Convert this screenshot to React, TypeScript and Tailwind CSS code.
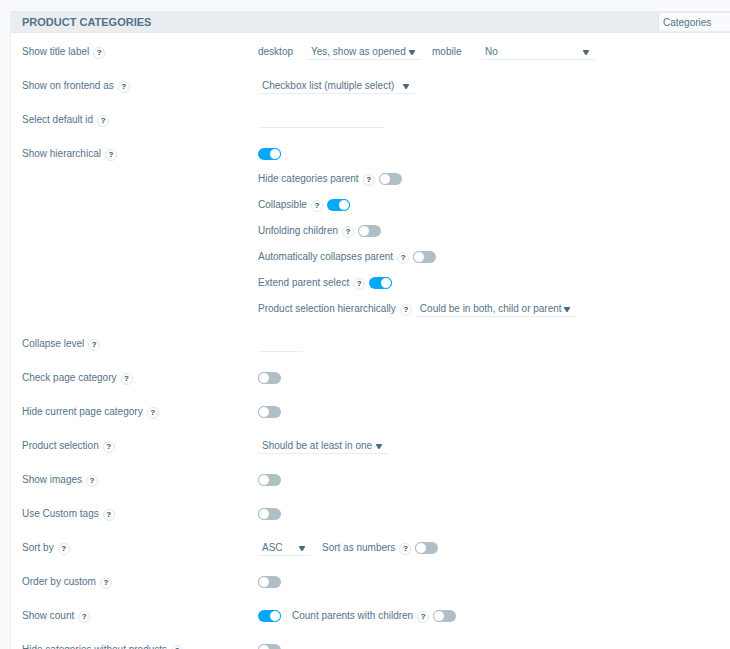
import { ReactNode, useState } from "react";

function Help({ topic }: { topic: string }) {
  return (
    <button
      type="button"
      aria-label={`Help: ${topic}`}
      className="mt-0.5 flex h-3 w-3 shrink-0 items-center justify-center rounded-full border border-[#e0e7ec] bg-white text-[8px] leading-none font-bold text-[#2f4a5c]"
    >
      ?
    </button>
  );
}

function Toggle({ id, label, on = false }: { id: string; label?: string; on?: boolean }) {
  return (
    <input
      id={id}
      type="checkbox"
      role="switch"
      aria-label={label}
      defaultChecked={on}
      className="flex h-3 w-[23px] shrink-0 appearance-none rounded-full bg-[#b0bec5] before:h-3 before:w-3 before:rounded-full before:border before:border-[#b0bec5] before:bg-white checked:justify-end checked:bg-[#03a9f4] checked:before:border-[#03a9f4]"
    />
  );
}

function Select({ id, label, options, width }: { id: string; label?: string; options: string[]; width: string }) {
  return (
    <div className={`relative shrink-0 ${width}`}>
      <select
        id={id}
        aria-label={label}
        className="block h-4 w-full appearance-none border-b border-[#e8edf0] bg-transparent pl-1 leading-4"
      >
        {options.map((option) => (
          <option key={option}>{option}</option>
        ))}
      </select>
      <svg viewBox="0 0 6 5" className="pointer-events-none absolute top-[6px] right-1.5 h-[5px] w-1.5 fill-[#4b6b80]">
        <path d="M0 0h6v1L3.5 5h-1L0 1z" />
      </svg>
    </div>
  );
}

function Row({ label, id, children }: { label: string; id: string; children: ReactNode }) {
  return (
    <div className="grid grid-cols-[236px_1fr]">
      <div className="flex h-[34px] items-center gap-1">
        <label htmlFor={id}>{label}</label>
        <Help topic={label} />
      </div>
      <div className="flex min-h-[34px] flex-wrap items-center">{children}</div>
    </div>
  );
}

function SubOption({ label, id, children }: { label: string; id: string; children: ReactNode }) {
  return (
    <div className="flex h-[26px] items-center gap-1">
      <label htmlFor={id}>{label}</label>
      <Help topic={label} />
      {children}
    </div>
  );
}

export default function App() {
  const [title, setTitle] = useState("Categories");

  return (
    <div className="min-h-screen bg-[#f8fafc] pt-[11px] pl-2.5 font-['Liberation_Sans',Arial,sans-serif] text-[10px] leading-4 text-[#54728a]">
      <section className="border-l border-[#e8edf0] bg-white">
        <header className="flex h-[22px] items-center justify-between border-y border-[#e4eaed] bg-[#eaeef0] pl-[11px]">
          <h2 className="text-[11px] font-bold">PRODUCT CATEGORIES</h2>
          <input
            type="text"
            aria-label="Title"
            value={title}
            onChange={(e) => setTitle(e.target.value)}
            className="h-[18px] w-[72px] border-l border-[#dfe6ea] bg-[#f8fafb] pl-1"
          />
        </header>

        <div className="pt-0.5 pr-3 pb-4 pl-[11px]">
          <Row label="Show title label" id="title-desktop">
            <label htmlFor="title-desktop" className="w-[49px]">desktop</label>
            <Select id="title-desktop" width="w-[114px]" options={["Yes, show as opened", "Yes, show as closed", "No"]} />
            <label htmlFor="title-mobile" className="ml-[11px] w-[49px]">mobile</label>
            <Select id="title-mobile" width="w-[114px]" options={["No", "Yes, show as opened", "Yes, show as closed"]} />
          </Row>
          <Row label="Show on frontend as" id="frontend">
            <Select id="frontend" width="w-[157px]" options={["Checkbox list (multiple select)", "Radio list", "Drop-down"]} />
          </Row>
          <Row label="Select default id" id="default-id">
            <input id="default-id" type="text" className="h-4 w-[126px] border-b border-[#e8edf0]" />
          </Row>
          <Row label="Show hierarchical" id="hierarchical">
            <div>
              <div className="flex h-[34px] items-center">
                <Toggle id="hierarchical" on />
              </div>
              <div className="-mt-[5px] pb-[5px]">
                <SubOption label="Hide categories parent" id="hide-parent">
                  <Toggle id="hide-parent" />
                </SubOption>
                <SubOption label="Collapsible" id="collapsible">
                  <Toggle id="collapsible" on />
                </SubOption>
                <SubOption label="Unfolding children" id="unfolding">
                  <Toggle id="unfolding" />
                </SubOption>
                <SubOption label="Automatically collapses parent" id="auto-collapse">
                  <Toggle id="auto-collapse" />
                </SubOption>
                <SubOption label="Extend parent select" id="extend-parent">
                  <Toggle id="extend-parent" on />
                </SubOption>
                <SubOption label="Product selection hierarchically" id="selection-hierarchy">
                  <Select id="selection-hierarchy" width="w-[160px]" options={["Could be in both, child or parent", "Should be in both"]} />
                </SubOption>
              </div>
            </div>
          </Row>
          <Row label="Collapse level" id="collapse-level">
            <input id="collapse-level" type="text" className="h-4 w-[45px] border-b border-[#e8edf0]" />
          </Row>
          <Row label="Check page category" id="check-page">
            <Toggle id="check-page" />
          </Row>
          <Row label="Hide current page category" id="hide-current">
            <Toggle id="hide-current" />
          </Row>
          <Row label="Product selection" id="selection">
            <Select id="selection" width="w-[130px]" options={["Should be at least in one", "Should be in all"]} />
          </Row>
          <Row label="Show images" id="images">
            <Toggle id="images" />
          </Row>
          <Row label="Use Custom tags" id="custom-tags">
            <Toggle id="custom-tags" />
          </Row>
          <Row label="Sort by" id="sort">
            <div className="flex items-center gap-[11px]">
              <Select id="sort" width="w-[53px]" options={["ASC", "DESC"]} />
              <SubOption label="Sort as numbers" id="sort-numbers">
                <Toggle id="sort-numbers" />
              </SubOption>
            </div>
          </Row>
          <Row label="Order by custom" id="order-custom">
            <Toggle id="order-custom" />
          </Row>
          <Row label="Show count" id="count">
            <div className="flex items-center gap-[11px]">
              <Toggle id="count" on />
              <SubOption label="Count parents with children" id="count-parents">
                <Toggle id="count-parents" />
              </SubOption>
            </div>
          </Row>
          <Row label="Hide categories without products" id="hide-empty">
            <Toggle id="hide-empty" />
          </Row>
        </div>
      </section>
    </div>
  );
}
